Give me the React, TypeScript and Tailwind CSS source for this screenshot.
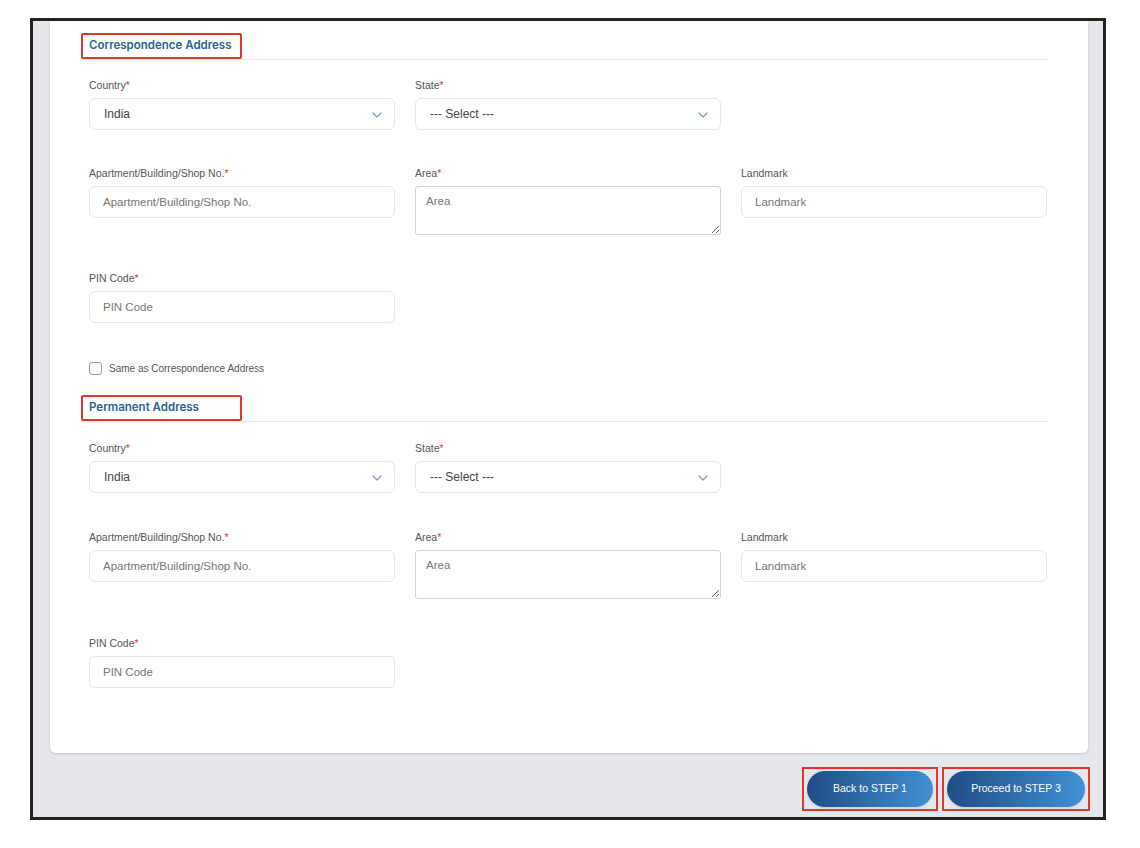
import React from 'react';

const Req = () => <span className="text-[#e53935]">*</span>;

const Label = ({ text, required }: { text: string; required?: boolean }) => (
  <label className="block h-[12px] text-[10.5px] leading-[12px] text-[#555] mb-[7px]">
    {text}
    {required && <Req />}
  </label>
);

const Chevron = () => (
  <svg width="10" height="6" viewBox="0 0 10 6" className="absolute right-[12px] top-[13px]">
    <path d="M1 1l4 4 4-4" fill="none" stroke="#7d9dc4" strokeWidth="1.2" strokeLinecap="round" strokeLinejoin="round" />
  </svg>
);

const Select = ({ value }: { value: string }) => (
  <div className="relative h-[32px] rounded-md border border-[#e3e6ea] bg-white pl-[14px] flex items-center text-[12px] text-[#444]">
    {value}
    <Chevron />
  </div>
);

const Input = ({ placeholder }: { placeholder: string }) => (
  <input
    placeholder={placeholder}
    className="block w-full h-[32px] rounded-md border border-[#e3e6ea] bg-white px-[13px] text-[11.5px] text-[#444] placeholder:text-[#777] outline-none"
  />
);

const Area = () => (
  <textarea
    placeholder="Area"
    className="block w-full h-[49px] rounded-[3px] border border-[#cfd3d8] bg-white px-[10px] pt-[6px] text-[11.5px] text-[#444] placeholder:text-[#777] outline-none"
  />
);

const Heading = ({ title }: { title: string }) => (
  <div className="border-b border-[#e6e6e6]">
    <div
      className="w-[161px] h-[26px] border-2 border-[#e3352b] rounded-[2px] pl-[6px] flex items-center text-[11.5px] font-semibold text-[#2b6391]"
      style={{ fontFamily: 'Inter, sans-serif' }}
    >
      {title}
    </div>
  </div>
);

const AddressBlock = ({ title, gridClass }: { title: string; gridClass: string }) => (
  <div>
    <Heading title={title} />
    <div className={`pl-2 grid grid-cols-[306px_306px_306px] gap-x-[20px] items-start ${gridClass}`}>
      <div>
        <Label text="Country" required />
        <Select value="India" />
      </div>
      <div>
        <Label text="State" required />
        <Select value="--- Select ---" />
      </div>
      <div />
      <div>
        <Label text="Apartment/Building/Shop No." required />
        <Input placeholder="Apartment/Building/Shop No." />
      </div>
      <div>
        <Label text="Area" required />
        <Area />
      </div>
      <div>
        <Label text="Landmark" />
        <Input placeholder="Landmark" />
      </div>
      <div>
        <Label text="PIN Code" required />
        <Input placeholder="PIN Code" />
      </div>
    </div>
  </div>
);

const StepButton = ({ text, width }: { text: string; width: string }) => (
  <div className="border-2 border-[#e3352b] px-[3px] py-[2px]">
    <button
      className={`${width} h-[36px] rounded-full bg-gradient-to-r from-[#214d86] to-[#4191d4] text-white text-[10.5px] shadow-sm`}
    >
      {text}
    </button>
  </div>
);

export default function App() {
  return (
    <div className="min-h-[848px] bg-white pt-[18px] pl-[30px]" style={{ fontFamily: '"Liberation Sans", Arial, sans-serif' }}>
      <div className="w-[1076px] h-[802px] border-[3px] border-[#222] bg-[#e6e7ec] overflow-hidden">
        <div className="ml-[17px] w-[1038px] bg-white rounded-b-md shadow-[0_1px_3px_rgba(0,0,0,0.15)] pl-[31px] pr-[40px] pt-[12px] pb-[65px]">
          <AddressBlock title="Correspondence Address" gridClass="pt-[19px] gap-y-[37px]" />

          <div className="pl-2 mt-[39px] flex items-center gap-[7px]">
            <input type="checkbox" className="w-[13px] h-[13px] appearance-none rounded-[3px] border border-[#9aa0a6] bg-white" />
            <span className="text-[10px] leading-[13px] text-[#555]">Same as Correspondence Address</span>
          </div>

          <div className="mt-[20px]">
            <AddressBlock title="Permanent Address" gridClass="pt-[20px] gap-y-[38px]" />
          </div>
        </div>

        <div className="flex justify-end gap-[4px] mr-[13px] mt-[14px]">
          <StepButton text="Back to STEP 1" width="w-[126px]" />
          <StepButton text="Proceed to STEP 3" width="w-[138px]" />
        </div>
      </div>
    </div>
  );
}
